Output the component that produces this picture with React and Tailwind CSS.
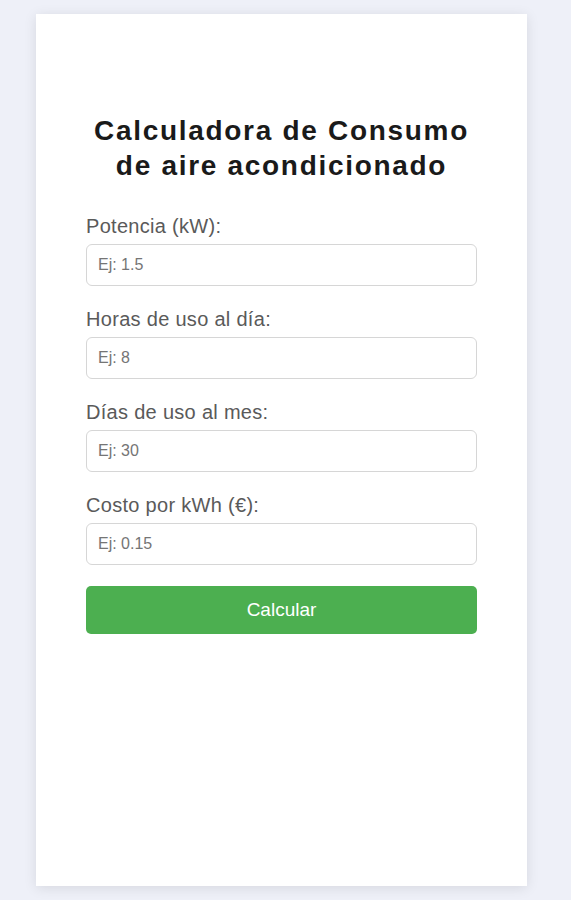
import React from 'react';

const fields = [
  { label: 'Potencia (kW):', placeholder: 'Ej: 1.5' },
  { label: 'Horas de uso al día:', placeholder: 'Ej: 8' },
  { label: 'Días de uso al mes:', placeholder: 'Ej: 30' },
  { label: 'Costo por kWh (€):', placeholder: 'Ej: 0.15' },
];

export default function App() {
  return (
    <div className="min-h-[900px] bg-[#eef0f8] pl-[36px] pr-[44px] pt-[14px] pb-[14px] font-['Liberation_Sans',Arial,sans-serif]">
      <div className="h-[872px] bg-white shadow-[0_2px_12px_rgba(0,0,0,0.1)] px-[50px] pt-[99px]">
        <h1 className="text-center text-[28px] leading-[35px] tracking-[1.7px] font-bold text-[#1a1a1a]">
          Calculadora de Consumo
          <br />
          de aire acondicionado
        </h1>

        <div className="mt-[33px] flex flex-col">
          {fields.map((f) => (
            <div key={f.label} className="mb-[23px] flex flex-col">
              <label className="text-[20px] leading-[20px] tracking-[0.3px] text-[#5a5a5a]">{f.label}</label>
              <input
                type="text"
                placeholder={f.placeholder}
                className="mt-[8px] h-[42px] rounded-[6px] border border-[#d6d6d6] bg-white px-[11px] text-[16px] text-[#333] placeholder:text-[#757575] outline-none"
              />
            </div>
          ))}
          <button className="-mt-[2px] h-[48px] rounded-[5px] bg-[#4caf50] text-[19px] text-white">
            Calcular
          </button>
        </div>
      </div>
    </div>
  );
}
